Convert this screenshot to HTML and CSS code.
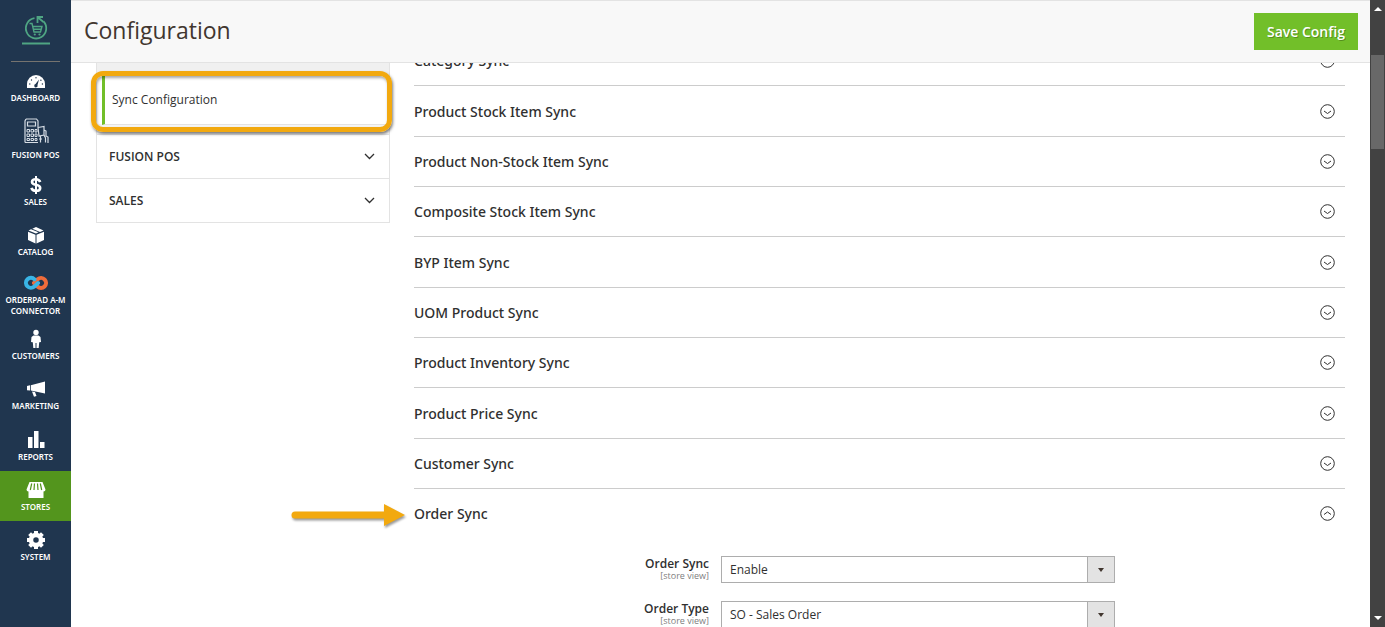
FILE: index.html
```
<!DOCTYPE html>
<html lang="en">
<head>
<meta charset="utf-8">
<title>Configuration</title>
<link rel="stylesheet" href="styles.css">
</head>
<body>
<div class="app">
  <nav class="menu" aria-label="Main menu">
    <a class="logo" href="#" aria-label="Home">
      <svg width="30" height="32" viewBox="0 0 30 32" fill="none" stroke="#4fa583" stroke-width="1.800">
        <path d="M13.500 4.200A10.200 10.200 0 1 0 22.500 7.300"/>
        <path d="M16.500 9V3H22M17 3.500l5.500 4.500"/>
        <path d="M8.500 9.500H11l2 8.500h6.500l1.500-5.500h-9M12.500 15.200h7.500" stroke-width="1.400"/>
        <circle cx="13.800" cy="20.500" r="1.100" fill="#4fa583" stroke="none"/><circle cx="18.500" cy="20.500" r="1.100" fill="#4fa583" stroke="none"/>
        <path d="M1 29.500h28" stroke-width="2"/>
      </svg>
    </a>
    <a class="item" href="#">
      <svg class="icon" width="20" height="20" viewBox="0 0 20 20"><path fill="#fff" d="M1 17V13a9 9 0 0 1 18 0v4z"/><path d="M13 8.500l-1.500 5.600a1.700 1.700 0 1 1-2-1z" fill="#20364f"/><g fill="#20364f"><circle cx="3.800" cy="13" r=".7"/><circle cx="5.500" cy="9" r=".7"/><circle cx="10" cy="6.800" r=".7"/><circle cx="14.900" cy="9.300" r=".7"/><circle cx="16.400" cy="13" r=".7"/></g></svg>
      <span>DASHBOARD</span>
    </a>
    <a class="item item-pos" href="#">
      <svg class="icon" width="26" height="26" viewBox="0 0 26 26" fill="none" stroke="#d5dce4" stroke-width="1.200"><path d="M3 1h10.500L15 3v6M2 24.500V3l1-2M4.500 4h8v4h-8zM2 24.500h13"/><path d="M4 11.500h2.500v2.500H4zM8 11.500h2.500v2.500H8zM12 11.500h2v2.500h-2zM4 16h2.500v2.500H4zM8 16h2.500v2.500H8zM12 16h2v2.500h-2zM4 20.500h2.500v2H4zM8 20.500h2.500v2H8zM12 20.500h2v2h-2z" stroke-width="1"/><path d="M15 9.500l6-1v8.500l-5 1zM17.500 18v6.500M16 21h3M21 12l2 1v5l2 1v6M21 17l1.500 3v4.500"/></svg>
      <span>FUSION POS</span>
    </a>
    <a class="item" href="#">
      <svg class="icon" width="20" height="20" viewBox="0 0 20 20" fill="none" stroke="#fff"><path d="M14.200 7C13.500 5.200 12 4.200 10 4.200c-2.300 0-4 1-4 2.700 0 4 8.200 1.900 8.200 6 0 1.800-1.700 2.900-4.200 2.900-2.300 0-4-1-4.600-3" stroke-width="2.600"/><path d="M10 1v18" stroke-width="2"/></svg>
      <span>SALES</span>
    </a>
    <a class="item" href="#">
      <svg class="icon" width="20" height="20" viewBox="0 0 20 20" fill="#fff"><path d="M2 6.700l7.500 3V18.500L2 15zM18 6.700l-7.500 3v8.800L18 15z"/><path d="M2.500 5.600L5 4.300l7.500 3L10 8.600zM6.300 3.700L10 2l7.500 3.600L14 6.900z"/></svg>
      <span>CATALOG</span>
    </a>
    <a class="item item-tall" href="#">
      <svg class="icon" width="24" height="20" viewBox="0 0 24 20" fill="none" stroke-width="4" stroke-linecap="round"><path d="M13.500 13.500A5 5 0 1 0 13.700 6.200L10 10" stroke="#ef6c3b"/><path d="M10.500 6.300A5 5 0 1 0 10.300 13.600L14 10" stroke="#39b5e6"/></svg>
      <span>ORDERPAD A-M<br>CONNECTOR</span>
    </a>
    <a class="item" href="#">
      <svg class="icon" width="20" height="20" viewBox="0 0 20 20" fill="#fff"><circle cx="10" cy="3.500" r="2.700"/><path d="M7.500 6.500h5l2 1.500.5 5-1.500.3-.3 0-.5 5.700h-2.200v-5h-1v5H7.300l-.5-5.700-.3 0L5 13l.5-5z"/></svg>
      <span>CUSTOMERS</span>
    </a>
    <a class="item item-roomy" href="#">
      <svg class="icon" width="20" height="20" viewBox="0 0 20 20" fill="#fff"><path d="M1 7l3-.7v5.200l-3-.3zM4.800 6.200L19 2.500v12L4.800 11.600z"/><path d="M6 12.500l3 .6 1.500 4-2.500.6z"/></svg>
      <span>MARKETING</span>
    </a>
    <a class="item" href="#">
      <svg class="icon" width="20" height="20" viewBox="0 0 20 20" fill="#fff"><path d="M2 7h4.500v11H2zM8 1h4.500v17H8zM14 12h4.500v6H14z"/></svg>
      <span>REPORTS</span>
    </a>
    <a class="item item-active" href="#" aria-current="page">
      <svg class="icon" width="20" height="20" viewBox="0 0 20 20"><path fill="#fff" d="M3.500 2h13L19.500 9.500a2 2 0 0 1-2 2V18h-15v-6.500a2 2 0 0 1-2-2z"/><path d="M5.700 3.500L4.300 10M8.500 3.500L8 10M11.500 3.500l.5 6.500M14.300 3.500l1.400 6.500" stroke="#53951d" stroke-width="1.200"/></svg>
      <span>STORES</span>
    </a>
    <a class="item" href="#">
      <svg class="icon" width="20" height="20" viewBox="0 0 20 20"><circle cx="10" cy="10" r="5" fill="none" stroke="#fff" stroke-width="4.500"/><g stroke="#fff" stroke-width="4"><path d="M10 1v3M10 16v3M1 10h3M16 10h3M3.600 3.600l2 2M14.400 14.400l2 2M3.600 16.400l2-2M14.400 5.600l2-2"/></g></svg>
      <span>SYSTEM</span>
    </a>
  </nav>

  <main class="page">
    <header class="topbar">
      <h1>Configuration</h1>
      <button class="save" type="button">Save Config</button>
    </header>
    <div class="content">
      <aside class="tabs">
        <div class="tab-current">
          <a href="#">Sync Configuration</a>
          <div class="highlight"></div>
        </div>
        <button class="tab" type="button">FUSION POS <svg width="11" height="7" viewBox="0 0 11 7"><path d="M1 1l4.500 4.500L10 1"/></svg></button>
        <button class="tab" type="button">SALES <svg width="11" height="7" viewBox="0 0 11 7"><path d="M1 1l4.500 4.500L10 1"/></svg></button>
      </aside>
      <section class="sections">
        <button class="section" type="button">Category Sync <svg width="15" height="15" viewBox="0 0 15 15"><circle cx="7.500" cy="7.500" r="6.800"/><path d="M4 7l3.500 2.500L11 7"/></svg></button>
        <button class="section" type="button">Product Stock Item Sync <svg width="15" height="15" viewBox="0 0 15 15"><circle cx="7.500" cy="7.500" r="6.800"/><path d="M4 7l3.500 2.500L11 7"/></svg></button>
        <button class="section" type="button">Product Non-Stock Item Sync <svg width="15" height="15" viewBox="0 0 15 15"><circle cx="7.500" cy="7.500" r="6.800"/><path d="M4 7l3.500 2.500L11 7"/></svg></button>
        <button class="section" type="button">Composite Stock Item Sync <svg width="15" height="15" viewBox="0 0 15 15"><circle cx="7.500" cy="7.500" r="6.800"/><path d="M4 7l3.500 2.500L11 7"/></svg></button>
        <button class="section" type="button">BYP Item Sync <svg width="15" height="15" viewBox="0 0 15 15"><circle cx="7.500" cy="7.500" r="6.800"/><path d="M4 7l3.500 2.500L11 7"/></svg></button>
        <button class="section" type="button">UOM Product Sync <svg width="15" height="15" viewBox="0 0 15 15"><circle cx="7.500" cy="7.500" r="6.800"/><path d="M4 7l3.500 2.500L11 7"/></svg></button>
        <button class="section" type="button">Product Inventory Sync <svg width="15" height="15" viewBox="0 0 15 15"><circle cx="7.500" cy="7.500" r="6.800"/><path d="M4 7l3.500 2.500L11 7"/></svg></button>
        <button class="section" type="button">Product Price Sync <svg width="15" height="15" viewBox="0 0 15 15"><circle cx="7.500" cy="7.500" r="6.800"/><path d="M4 7l3.500 2.500L11 7"/></svg></button>
        <button class="section" type="button">Customer Sync <svg width="15" height="15" viewBox="0 0 15 15"><circle cx="7.500" cy="7.500" r="6.800"/><path d="M4 7l3.500 2.500L11 7"/></svg></button>
        <button class="section section-open" type="button" aria-expanded="true">Order Sync <svg width="15" height="15" viewBox="0 0 15 15"><circle cx="7.500" cy="7.500" r="6.800"/><path d="M4 8.500L7.500 6 11 8.500"/></svg>
          <svg class="pointer" width="120" height="32" viewBox="0 0 120 32"><path d="M7 16h92" stroke="#f2a90f" stroke-width="7" stroke-linecap="round"/><path d="M96 5l21 11-21 11z" fill="#f2a90f"/></svg>
        </button>
        <form class="fields">
          <div class="caption"><label for="order-sync">Order Sync</label><small>[store view]</small></div>
          <div class="select"><select id="order-sync"><option>Enable</option><option>Disable</option></select><span class="arrow"></span></div>
          <div class="caption"><label for="order-type">Order Type</label><small>[store view]</small></div>
          <div class="select"><select id="order-type"><option>SO - Sales Order</option></select><span class="arrow"></span></div>
        </form>
      </section>
    </div>
  </main>

  <div class="scrollbar" aria-hidden="true">
    <svg width="8" height="5" viewBox="0 0 8 5"><path d="M0 5l4-4 4 4z" fill="#fff"/></svg>
    <div class="track"><div class="thumb"></div></div>
    <svg width="8" height="5" viewBox="0 0 8 5"><path d="M0 0l4 4 4-4z" fill="#fff"/></svg>
  </div>
</div>
</body>
</html>
```
FILE: styles.css
```
* { box-sizing: border-box; }
body {
  margin: 0;
  background: #fff;
  color: #303030;
  font-family: "Open Sans", "Noto Sans", sans-serif;
  font-size: 12px;
}
button { font: inherit; color: inherit; cursor: pointer; }
a { color: inherit; text-decoration: none; }
.app { display: flex; height: 100vh; overflow: hidden; }

.menu { flex: none; width: 71px; background: #20364f; color: #fff; }
.logo {
  display: flex;
  justify-content: center;
  height: 62px;
  margin: 0 11px;
  padding-top: 14px;
  border-bottom: 1px solid #75736f;
}
.item {
  display: flex;
  flex-direction: column;
  align-items: center;
  gap: 1px;
  padding: 9px 0;
  font-family: "Noto Sans", "Open Sans", sans-serif;
  font-size: 8px;
  font-weight: 600;
  line-height: 11px;
  text-align: center;
  white-space: nowrap;
}
.icon { flex: none; display: block; }
.item-pos { gap: 5px; padding: 6px 0; }
.item-tall { padding: 7px 0 4px; }
.item-roomy { padding-bottom: 10px; }
.item-active { background: #53951d; }

.page { flex: 1; min-width: 0; display: flex; flex-direction: column; }
.topbar {
  position: relative;
  z-index: 1;
  flex: none;
  display: flex;
  align-items: center;
  justify-content: space-between;
  height: 63px;
  padding: 0 12px 0 13px;
  background: #f8f8f8;
  border-top: 1px solid #e3e3e3;
  border-bottom: 1px solid #e3e3e3;
}
h1 { margin: 0; padding-bottom: 3px; font-size: 23px; font-weight: 400; line-height: 32px; color: #41362f; }
.save {
  height: 37px;
  padding: 0 13px;
  border: 0;
  background: #72bf29;
  color: #fff;
  font-size: 14px;
  font-weight: 600;
  text-shadow: 1px 1px 0 rgba(0, 0, 0, .25);
}

.content { flex: 1; min-height: 0; display: flex; align-items: flex-start; gap: 24px; padding: 0 25px; }
.tabs { flex: none; width: 294px; border: 1px solid #e3e3e3; border-top: 0; }
.tab-current { position: relative; padding: 12px 0 9px 5px; background: linear-gradient(#f0f0f0 12px, #fff 12px, #fff 61px, #f5f5f5 61px); }
.tab-current a {
  display: block;
  padding: 0 7px;
  border-left: 3px solid #72bf29;
  border-bottom: 1px solid #e3e3e3;
  font-weight: 500;
  line-height: 49px;
}
.highlight {
  position: absolute;
  inset: 8px -3px 2px -6px;
  border: 5px solid #f2a90f;
  border-radius: 12px;
  box-shadow: 1px 2px 3px rgba(0, 0, 0, .5), inset 1px 2px 3px rgba(0, 0, 0, .35);
  pointer-events: none;
}
.tab {
  display: flex;
  align-items: center;
  justify-content: space-between;
  width: 100%;
  height: 44px;
  padding: 0 14px 1px 12px;
  border: 0;
  border-top: 1px solid #e3e3e3;
  background: #fff;
  font-weight: 600;
}
.tab svg { fill: none; stroke: #303030; stroke-width: 1.3; }

.sections { flex: 1; min-width: 0; margin-top: -27px; }
.section {
  position: relative;
  display: flex;
  align-items: center;
  justify-content: space-between;
  width: 100%;
  height: 50px;
  padding: 0 10px 0 0;
  border: 0;
  border-bottom: 1px solid #ccc;
  background: none;
  font-family: "Noto Sans", "Open Sans", sans-serif;
  font-size: 14px;
  font-weight: 500;
}
.section:nth-child(3n + 2) { height: 51px; }
.section.section-open { border-color: transparent; }
.section svg { flex: none; fill: none; stroke: #303030; stroke-width: 1; }
.section .pointer {
  position: absolute;
  right: 100%;
  top: 10px;
  margin-right: 6px;
  stroke: none;
  filter: drop-shadow(1px 2px 1px rgba(0, 0, 0, .4));
}

.fields {
  display: grid;
  grid-template-columns: 295px minmax(0, 394px);
  column-gap: 12px;
  row-gap: 18px;
  padding-top: 17px;
}
.caption { display: flex; flex-direction: column; height: 27px; text-align: right; }
.caption label { font-weight: 600; line-height: 15px; }
.caption small { font-size: 9px; line-height: 9px; color: #808080; }
.select { display: grid; grid-template-columns: minmax(0, 1fr) 28px; height: 27px; }
.select select {
  grid-area: 1 / 1 / 2 / 3;
  appearance: none;
  padding: 0 8px;
  border: 1px solid #adadad;
  border-radius: 0;
  background: #fff;
  color: #303030;
  font: 12px "Open Sans", sans-serif;
}
.arrow {
  grid-area: 1 / 2;
  z-index: 1;
  display: grid;
  place-items: center;
  border: 1px solid #adadad;
  background: #e3e3e3;
  pointer-events: none;
}
.arrow::after { content: ""; border: 3px solid transparent; border-top: 4px solid #41362f; border-bottom: 0; }

.scrollbar {
  flex: none;
  display: flex;
  flex-direction: column;
  align-items: center;
  width: 15px;
  padding: 6px 0;
  background: #424242;
}
.track { flex: 1; align-self: stretch; padding: 44px 1px 0; }
.thumb { height: 94px; background: #686868; }
```
